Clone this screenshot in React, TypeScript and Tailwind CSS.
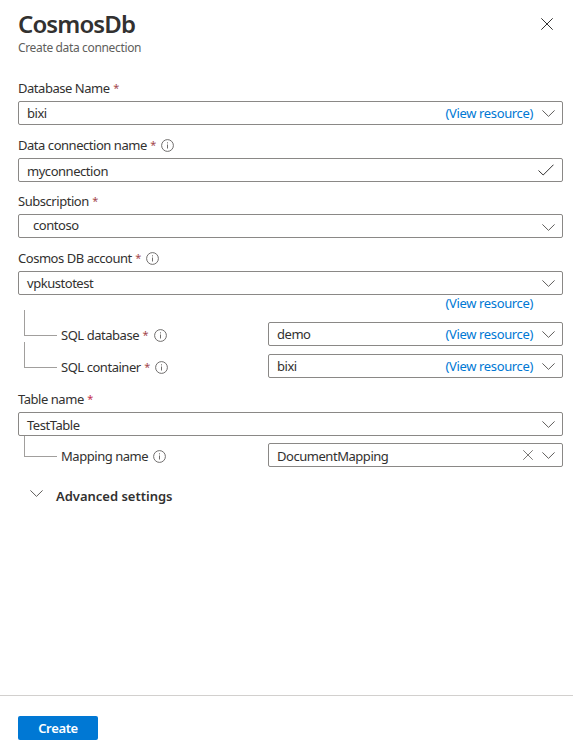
import React from "react";

type IconProps = { className?: string };

const Chevron = ({ className = "" }: IconProps) => (
  <svg className={`h-[7px] w-[13px] shrink-0 ${className}`} viewBox="0 0 13 7" fill="none" stroke="#605e5c">
    <path d="M.4.4 6.5 6.4 12.6.4" />
  </svg>
);

const Cross = ({ className = "" }: IconProps) => (
  <svg className={`shrink-0 ${className}`} viewBox="0 0 12 12" fill="none" stroke="currentColor">
    <path d="M.3.3 11.7 11.7M11.7.3.3 11.7" />
  </svg>
);

const Check = () => (
  <svg className="mr-px h-3 w-4 shrink-0" viewBox="0 0 16 12" fill="none" stroke="#323130">
    <path d="M.5 6.5 5.2 11 15.5.7" />
  </svg>
);

const Info = () => (
  <svg className="ml-[5px] mt-px h-[13px] w-[13px] shrink-0" viewBox="0 0 13 13" fill="none" stroke="#605e5c">
    <circle cx="6.5" cy="6.5" r="5.9" strokeWidth=".9" />
    <path d="M6.5 5.5v4M6.5 3.3v1.1" strokeWidth=".9" />
  </svg>
);

type LabelProps = { text: string; required?: boolean; info?: boolean; className?: string; star?: string };

const Label = ({ text, required, info, className = "", star = "text-[#a4474c]" }: LabelProps) => (
  <div className={`flex h-[18px] items-center whitespace-nowrap ${className}`}>
    <span>{text}</span>
    {required && <span className={`ml-[3.5px] w-[6px] text-[11px] tracking-normal ${star}`}>*</span>}
    {info && <Info />}
  </div>
);

const ViewResource = () => (
  <a className="whitespace-nowrap tracking-[-0.36px] text-[#0078d4]">(View resource)</a>
);

type FieldProps = { value: string; className?: string; valueClass?: string; children?: React.ReactNode };

const Field = ({ value, className = "", valueClass = "", children }: FieldProps) => (
  <div className={`flex h-6 shrink-0 items-center rounded-[2px] border border-[#8a8886] pl-2 pr-[7px] ${className}`}>
    <span className={`flex-1 ${valueClass}`}>{value}</span>
    {children}
  </div>
);

const Branch = ({ className = "" }: IconProps) => (
  <div className={`ml-1.5 w-[33px] shrink-0 self-start border-b border-l border-[#a19f9d] ${className}`} />
);

export default function App() {
  return (
    <main className="flex h-[751px] w-[573px] flex-col overflow-hidden bg-white font-['Noto_Sans','Open_Sans',sans-serif] text-[13px] leading-[18px] tracking-[-0.46px] text-[#323130]">
      <header className="flex h-[79px] shrink-0 justify-between pl-[18px] pr-5">
        <div>
          <h1 className="mt-[8px] text-[24px] font-semibold leading-[32px] tracking-[-0.9px]">CosmosDb</h1>
          <p className="text-[12px] leading-[16px] tracking-[-0.35px] text-[#605e5c]">Create data connection</p>
        </div>
        <Cross className="mt-[18px] h-3 w-3" />
      </header>

      <section className="flex flex-col pl-[18px] pr-[10px]">
        <Label text="Database Name" required />
        <Field value="bixi" className="mt-1">
          <ViewResource />
          <Chevron className="ml-[9px]" />
        </Field>

        <Label text="Data connection name" required info className="mt-[11px]" />
        <Field value="myconnection" className="mt-1" valueClass="pt-0.5">
          <Check />
        </Field>

        <Label text="Subscription" required className="mt-[10px]" />
        <Field value="contoso" className="mt-1" valueClass="pb-0.5 pl-1.5">
          <Chevron className="mt-0.5" />
        </Field>

        <Label text="Cosmos DB account" required info className="mt-[11px]" />
        <Field value="vpkustotest" className="mt-1">
          <Chevron />
        </Field>
        <div className="flex h-[15px] items-center justify-end pr-[30px]">
          <ViewResource />
        </div>

        <div className="flex h-8 items-start">
          <Branch className="h-[26px]" />
          <Label text="SQL database" required info className="ml-1 mt-4 w-[207px]" />
          <Field value="demo" className="mt-3 w-[295px]">
            <ViewResource />
            <Chevron className="ml-[9px]" />
          </Field>
        </div>
        <div className="flex h-9 items-start">
          <Branch className="h-[26px]" />
          <Label text="SQL container" required info className="ml-1 mt-4 w-[207px]" />
          <Field value="bixi" className="mt-3 w-[295px]">
            <ViewResource />
            <Chevron className="ml-[9px]" />
          </Field>
        </div>

        <Label text="Table name" required className="mt-3" star="text-[#c4314b]" />
        <Field value="TestTable" className="mt-1" valueClass="pt-0.5">
          <Chevron />
        </Field>
        <div className="flex h-[31px] items-start">
          <Branch className="h-[21px]" />
          <Label text="Mapping name" info className="ml-1 mt-[11px] w-[207px]" />
          <Field value="DocumentMapping" className="mt-[7px] w-[295px]" valueClass="pt-0.5">
            <Cross className="h-[10px] w-[10px] text-[#605e5c]" />
            <Chevron className="ml-[9px]" />
          </Field>
        </div>

        <div className="mt-5 flex h-[18px] items-center pl-3">
          <Chevron className="mb-1.5" />
          <span className="ml-[13px] font-semibold tracking-[-0.01px]">Advanced settings</span>
        </div>
      </section>

      <footer className="mt-auto h-14 shrink-0 border-t border-[#d2d0ce] pl-[18px] pt-5">
        <button className="h-6 w-20 rounded-[2px] bg-[#0078d4] font-semibold leading-6 tracking-[-0.35px] text-white">
          Create
        </button>
      </footer>
    </main>
  );
}
